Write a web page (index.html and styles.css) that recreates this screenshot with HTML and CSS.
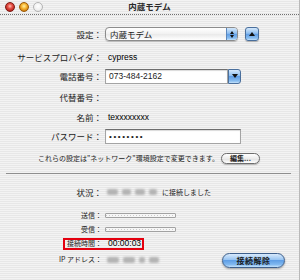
FILE: index.html
```html
<!DOCTYPE html>
<html lang="ja">
<head>
    <meta charset="UTF-8">
    <title>内蔵モデム</title>
    <link rel="stylesheet" href="styles.css">
</head>
<body>
    <div class="window">
        <header class="titlebar">
            <div class="lights">
                <span class="light close"></span>
                <span class="light min"></span>
                <span class="light zoom"></span>
            </div>
            <div class="title">内蔵モデム</div>
            <div></div>
        </header>

        <main class="content">
            <div class="row mt-11">
                <span class="label">設定：</span>
                <div class="field-group">
                    <div class="popup">
                        <span class="popup-text">内蔵モデム</span>
                        <span class="popup-arrows"><i class="tri up"></i><i class="tri down"></i></span>
                    </div>
                    <button class="square-btn"><i class="tri up big"></i></button>
                </div>
            </div>

            <div class="row mt-7">
                <span class="label">サービスプロバイダ：</span>
                <span class="value">cypress</span>
            </div>

            <div class="row mt-3">
                <span class="label">電話番号：</span>
                <div class="field-group">
                    <div class="textfield phone">073-484-2162</div>
                    <button class="combo-btn"><i class="tri down big"></i></button>
                </div>
            </div>

            <div class="row mt-5">
                <span class="label">代替番号：</span>
                <span class="value"></span>
            </div>

            <div class="row mt-4">
                <span class="label">名前：</span>
                <span class="value">texxxxxxxx</span>
            </div>

            <div class="row mt-3">
                <span class="label">パスワード：</span>
                <div class="textfield password">••••••••</div>
            </div>

            <div class="note-row">
                <span class="note">これらの設定は"ネットワーク"環境設定で変更できます。</span>
                <button class="pill-btn">編集...</button>
            </div>

            <div class="separator"></div>

            <div class="row mt-10">
                <span class="label">状況：</span>
                <div class="status">
                    <span class="blur w11"></span>
                    <span class="blur w9"></span>
                    <span class="blur w10"></span>
                    <span class="blur w8"></span>
                    <span class="status-text">に接続しました</span>
                </div>
            </div>

            <div class="row short mt-9">
                <span class="label small">送信：</span>
                <div class="meter"></div>
            </div>

            <div class="row short mt-2">
                <span class="label small">受信：</span>
                <div class="meter"></div>
            </div>

            <div class="row short mt-2 marked">
                <span class="label small">接続時間：</span>
                <span class="value">00:00:03</span>
                <span class="highlight"></span>
            </div>

            <div class="row ip-row mt-2">
                <span class="label small">IP アドレス：</span>
                <div class="status">
                    <span class="blur w12"></span>
                    <span class="blur w12"></span>
                    <span class="blur w6"></span>
                    <span class="blur w10"></span>
                </div>
                <button class="aqua-btn">接続解除</button>
            </div>
        </main>
    </div>
</body>
</html>
```

FILE: styles.css
```css
* {
    margin: 0;
    padding: 0;
    box-sizing: border-box;
}

body {
    width: 300px;
    height: 280px;
    overflow: hidden;
    font-family: "Noto Sans CJK JP", sans-serif;
    color: #1c1c1c;
    background: repeating-linear-gradient(to bottom, #f3f3f3 0 1px, #e7e7e7 1px 2px);
}

.window {
    height: 280px;
    border-right: 1px solid #b9b9b9;
}

/* title bar */
.titlebar {
    height: 15px;
    display: grid;
    grid-template-columns: 1fr auto 1fr;
    align-items: center;
    border-bottom: 1px dotted #707070;
    padding-bottom: 1px;
}

.lights {
    display: flex;
    gap: 4px;
    padding-left: 5px;
}

.light {
    width: 10px;
    height: 10px;
    border-radius: 50%;
}

.close {
    background: radial-gradient(circle at 50% 40%, #ffc2b8 0, #e8554b 35%, #b5231c 75%);
    border: 1px solid #7d1a14;
}

.min {
    background: radial-gradient(circle at 50% 40%, #fff0a8 0, #f7b733 40%, #c9760b 80%);
    border: 1px solid #9a5b0a;
}

.zoom {
    background: radial-gradient(circle at 50% 40%, #ffffff 0, #efefef 60%, #d9d9d9);
    border: 1px solid #b4b4b4;
}

.title {
    font-size: 8.5px;
    font-weight: 700;
    color: #2a2a2a;
    line-height: 1;
}

/* form rows */
.row {
    display: grid;
    grid-template-columns: 102px auto;
    column-gap: 3px;
    align-items: center;
    height: 16px;
    position: relative;
}

.row.short {
    height: 12px;
}

.mt-2 { margin-top: 2px; }
.mt-3 { margin-top: 3px; }
.mt-4 { margin-top: 4px; }
.mt-5 { margin-top: 5px; }
.mt-7 { margin-top: 7px; }
.mt-9 { margin-top: 9px; }
.mt-10 { margin-top: 10px; }
.mt-11 { margin-top: 11px; }

.label {
    text-align: right;
    font-size: 8.5px;
    line-height: 1;
    white-space: nowrap;
    color: #222;
}

.label.small {
    font-size: 7px;
}

.value {
    font-family: "Liberation Sans", sans-serif;
    font-size: 8.5px;
    padding-left: 3px;
    color: #000;
    line-height: 1;
}

.field-group {
    display: flex;
    align-items: center;
}

/* popup menu */
.popup {
    width: 133px;
    height: 14px;
    display: flex;
    border: 1px solid #8c8c8c;
    border-radius: 4px;
    background: linear-gradient(to bottom, #ffffff, #f1f1f1 50%, #e9e9e9 51%, #ffffff);
    box-shadow: 0 1px 1px rgba(0, 0, 0, 0.2);
    overflow: hidden;
}

.popup-text {
    flex: 1;
    font-size: 8.5px;
    line-height: 12px;
    padding-left: 4px;
}

.popup-arrows {
    width: 11px;
    display: flex;
    flex-direction: column;
    align-items: center;
    justify-content: center;
    gap: 1px;
    border-left: 1px solid #5b87bd;
    background: linear-gradient(to bottom, #d3e7fb, #8fbff0 45%, #5f9de5 50%, #88bdf0 85%, #c6e3fc);
}

.tri {
    display: block;
    width: 0;
    height: 0;
    border-left: 2px solid transparent;
    border-right: 2px solid transparent;
}

.tri.up {
    border-bottom: 3px solid #111;
}

.tri.down {
    border-top: 3px solid #111;
}

.tri.big {
    border-left-width: 3px;
    border-right-width: 3px;
    border-top-width: 4px;
    border-bottom-width: 4px;
}

.tri.up.big {
    border-top: 0;
}

.tri.down.big {
    border-bottom: 0;
}

.square-btn,
.combo-btn {
    display: flex;
    align-items: center;
    justify-content: center;
    border: 1px solid #4a6f9c;
    background: linear-gradient(to bottom, #d3e7fb, #8fbff0 45%, #5f9de5 50%, #88bdf0 85%, #c6e3fc);
}

.square-btn {
    width: 14px;
    height: 14px;
    margin-left: 7px;
    border-radius: 3px;
    box-shadow: 0 1px 1px rgba(0, 0, 0, 0.25);
}

/* text fields */
.textfield {
    height: 15px;
    background: #fff;
    border: 1px solid #a4a4a4;
    border-top-color: #6e6e6e;
    box-shadow: inset 0 1px 1px rgba(0, 0, 0, 0.15);
    font-family: "Liberation Sans", sans-serif;
    font-size: 8.5px;
    line-height: 13px;
    padding-left: 3px;
}

.phone {
    width: 123px;
}

.combo-btn {
    width: 13px;
    height: 15px;
    border-radius: 0 3px 3px 0;
}

.password {
    width: 136px;
    font-size: 8px;
    letter-spacing: 1.6px;
    padding-left: 3px;
}

/* note */
.note-row {
    display: flex;
    align-items: center;
    height: 16px;
    margin-top: 6px;
    padding-left: 38px;
    padding-right: 39px;
}

.note {
    font-size: 7px;
    line-height: 1;
    white-space: nowrap;
}

.pill-btn {
    margin-left: auto;
    width: 39px;
    height: 11px;
    border: 1px solid #6d6d6d;
    border-radius: 6px;
    background: linear-gradient(to bottom, #ffffff, #ececec 50%, #e0e0e0 51%, #ffffff);
    box-shadow: 0 1px 1px rgba(0, 0, 0, 0.25);
    font-family: "Noto Sans CJK JP", sans-serif;
    font-size: 7px;
    font-weight: 700;
    line-height: 9px;
    color: #222;
}

.separator {
    height: 1px;
    margin: 7px 8px 0 6px;
    background: #8e8e8e;
}

/* status */
.status {
    display: flex;
    align-items: center;
    gap: 4px;
    padding-left: 2px;
}

.blur {
    height: 6px;
    background: #b4b4b4;
    border-radius: 2px;
    filter: blur(1px);
}

.w6 { width: 6px; }
.w8 { width: 8px; }
.w9 { width: 9px; }
.w10 { width: 10px; }
.w11 { width: 11px; }
.w12 { width: 12px; }

.status-text {
    font-size: 7px;
    line-height: 1;
    margin-left: 1px;
}

.meter {
    width: 71px;
    height: 5px;
    border: 1px solid #a2a2a2;
    border-radius: 1px;
    background:
        repeating-linear-gradient(to right, #c9c9c9 0 1px, transparent 1px 3px) center / 100% 1px no-repeat,
        #f7f7f7;
}

.highlight {
    position: absolute;
    left: 63px;
    top: 1px;
    width: 81px;
    height: 12px;
    border: 2px solid #e4000f;
}

.ip-row {
    grid-template-columns: 102px 1fr auto;
    align-items: start;
    height: 16px;
}

.ip-row .label,
.ip-row .status {
    align-self: center;
}

.aqua-btn {
    width: 63px;
    height: 15px;
    margin-top: 2px;
    margin-right: 14px;
    border: 1px solid #3d5f8c;
    border-radius: 8px;
    background: linear-gradient(to bottom, #d8eafc, #97c4f2 45%, #609fe6 50%, #7fb7ef 80%, #c3e2fc);
    box-shadow: 0 1px 2px rgba(0, 0, 0, 0.35);
    font-family: "Noto Sans CJK JP", sans-serif;
    font-size: 8px;
    font-weight: 700;
    letter-spacing: 0.5px;
    line-height: 13px;
    color: #1a1a1a;
}
```
